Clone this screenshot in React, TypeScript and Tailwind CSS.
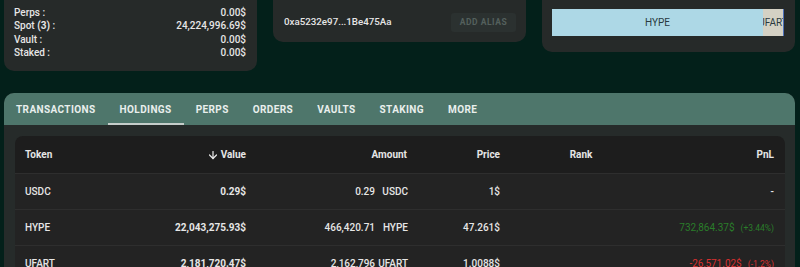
import React from "react";
import { ArrowDown } from "lucide-react";

const tabs = ["TRANSACTIONS", "HOLDINGS", "PERPS", "ORDERS", "VAULTS", "STAKING", "MORE"];

const cols = "grid grid-cols-[120px_121px_161px_93px_142px_133px]";

function Row({
  token,
  value,
  amount,
  sym,
  price,
  pnl,
}: {
  token: string;
  value: string;
  amount: string;
  sym: string;
  price: string;
  pnl: React.ReactNode;
}) {
  return (
    <div className={`${cols} h-[36px] items-center border-t border-[#2e2e2e] bg-[#232323] text-[10px] font-medium`}>
      <div className="pl-[10px]">{token}</div>
      <div className="pr-[10px] text-right font-bold">{value}</div>
      <div className="pr-[9px] flex justify-end">
        <span>{amount}</span>
        <span className="w-[33px] text-right">{sym}</span>
      </div>
      <div className="pr-[10px] text-right">{price}</div>
      <div></div>
      <div className="pr-[11px] text-right">{pnl}</div>
    </div>
  );
}

export default function App() {
  return (
    <div className="w-[800px] h-[267px] overflow-hidden bg-[#03201a] font-['Roboto',sans-serif] text-[#e6e6e6]">
      <div className="flex items-start gap-[16px] pl-[4px]">
        <div className="w-[253px] h-[71px] bg-[#262a29] rounded-b-[10px] pl-[10px] pr-[11px] pt-[6px] text-[10px] leading-[13.4px] font-medium">
          <div className="flex justify-between"><span>Perps :</span><span>0.00$</span></div>
          <div className="flex justify-between"><span>Spot <b className="font-bold">(3)</b> :</span><span>24,224,996.69$</span></div>
          <div className="flex justify-between"><span>Vault :</span><span>0.00$</span></div>
          <div className="flex justify-between"><span>Staked :</span><span>0.00$</span></div>
        </div>
        <div className="w-[253px] h-[42px] bg-[#262a29] rounded-b-[10px] pl-[11px] pr-[10px] pt-[2px] flex items-center justify-between">
          <span className="text-[9.75px] font-medium">0xa5232e97...1Be475Aa</span>
          <div className="w-[65px] h-[19px] rounded-[3px] bg-[#2b3130] flex items-center justify-center text-[8.5px] font-bold tracking-[0.06em] text-[#54605d]">
            ADD ALIAS
          </div>
        </div>
        <div className="w-[253px] h-[52px] bg-[#262a29] rounded-b-[10px] pl-[10px] pr-[11px] pt-[9px]">
          <div className="flex h-[27px] w-[232px] text-[10px] text-[#2a3a40]">
            <div className="w-[211px] bg-[#add8e6] flex items-center justify-center overflow-hidden">HYPE</div>
            <div className="w-[20px] bg-[#d4d1c4] flex items-center justify-center overflow-hidden whitespace-nowrap">
              UFART
            </div>
            <div className="w-[1px] bg-[#4d6fb8]"></div>
          </div>
        </div>
      </div>

      <div className="mt-[22px] ml-[4px] w-[791px] rounded-t-[10px] bg-[#262b2a] overflow-hidden">
        <div className="h-[32px] bg-[#4e766b] flex">
          {tabs.map((t) => (
            <div
              key={t}
              className="relative flex items-center px-[12px] text-[10px] font-bold tracking-[0.04em] text-[#e9efed]"
            >
              {t}
              {t === "HOLDINGS" && (
                <div className="absolute left-0 right-0 bottom-0 h-[2px] bg-[#c5cdca]"></div>
              )}
            </div>
          ))}
        </div>
        <div className="pt-[11px] pl-[11px] pr-[10px]">
          <div className="w-[770px] rounded-t-[8px] overflow-hidden">
            <div className={`${cols} h-[37px] items-center bg-[#1d1d1d] text-[10px] font-bold`}>
              <div className="pl-[10px]">Token</div>
              <div className="pr-[10px] flex justify-end items-center gap-[2px]">
                <ArrowDown size={12} strokeWidth={2.5} />
                <span>Value</span>
              </div>
              <div className="pr-[10px] text-right">Amount</div>
              <div className="pr-[10px] text-right">Price</div>
              <div className="text-center">Rank</div>
              <div className="pr-[11px] text-right">PnL</div>
            </div>
            <Row token="USDC" value="0.29$" amount="0.29" sym="USDC" price="1$" pnl="-" />
            <Row
              token="HYPE"
              value="22,043,275.93$"
              amount="466,420.71"
              sym="HYPE"
              price="47.261$"
              pnl={
                <span className="text-[#2a7d2a] font-normal">
                  732,864.37$<span className="ml-[6px] text-[8.5px]">(+3.44%)</span>
                </span>
              }
            />
            <Row
              token="UFART"
              value="2,181,720.47$"
              amount="2,162,796"
              sym="UFART"
              price="1.0088$"
              pnl={
                <span className="text-[#d93030] font-normal">
                  -26,571.02$<span className="ml-[6px] text-[8.5px]">(-1.2%)</span>
                </span>
              }
            />
          </div>
        </div>
      </div>
    </div>
  );
}
